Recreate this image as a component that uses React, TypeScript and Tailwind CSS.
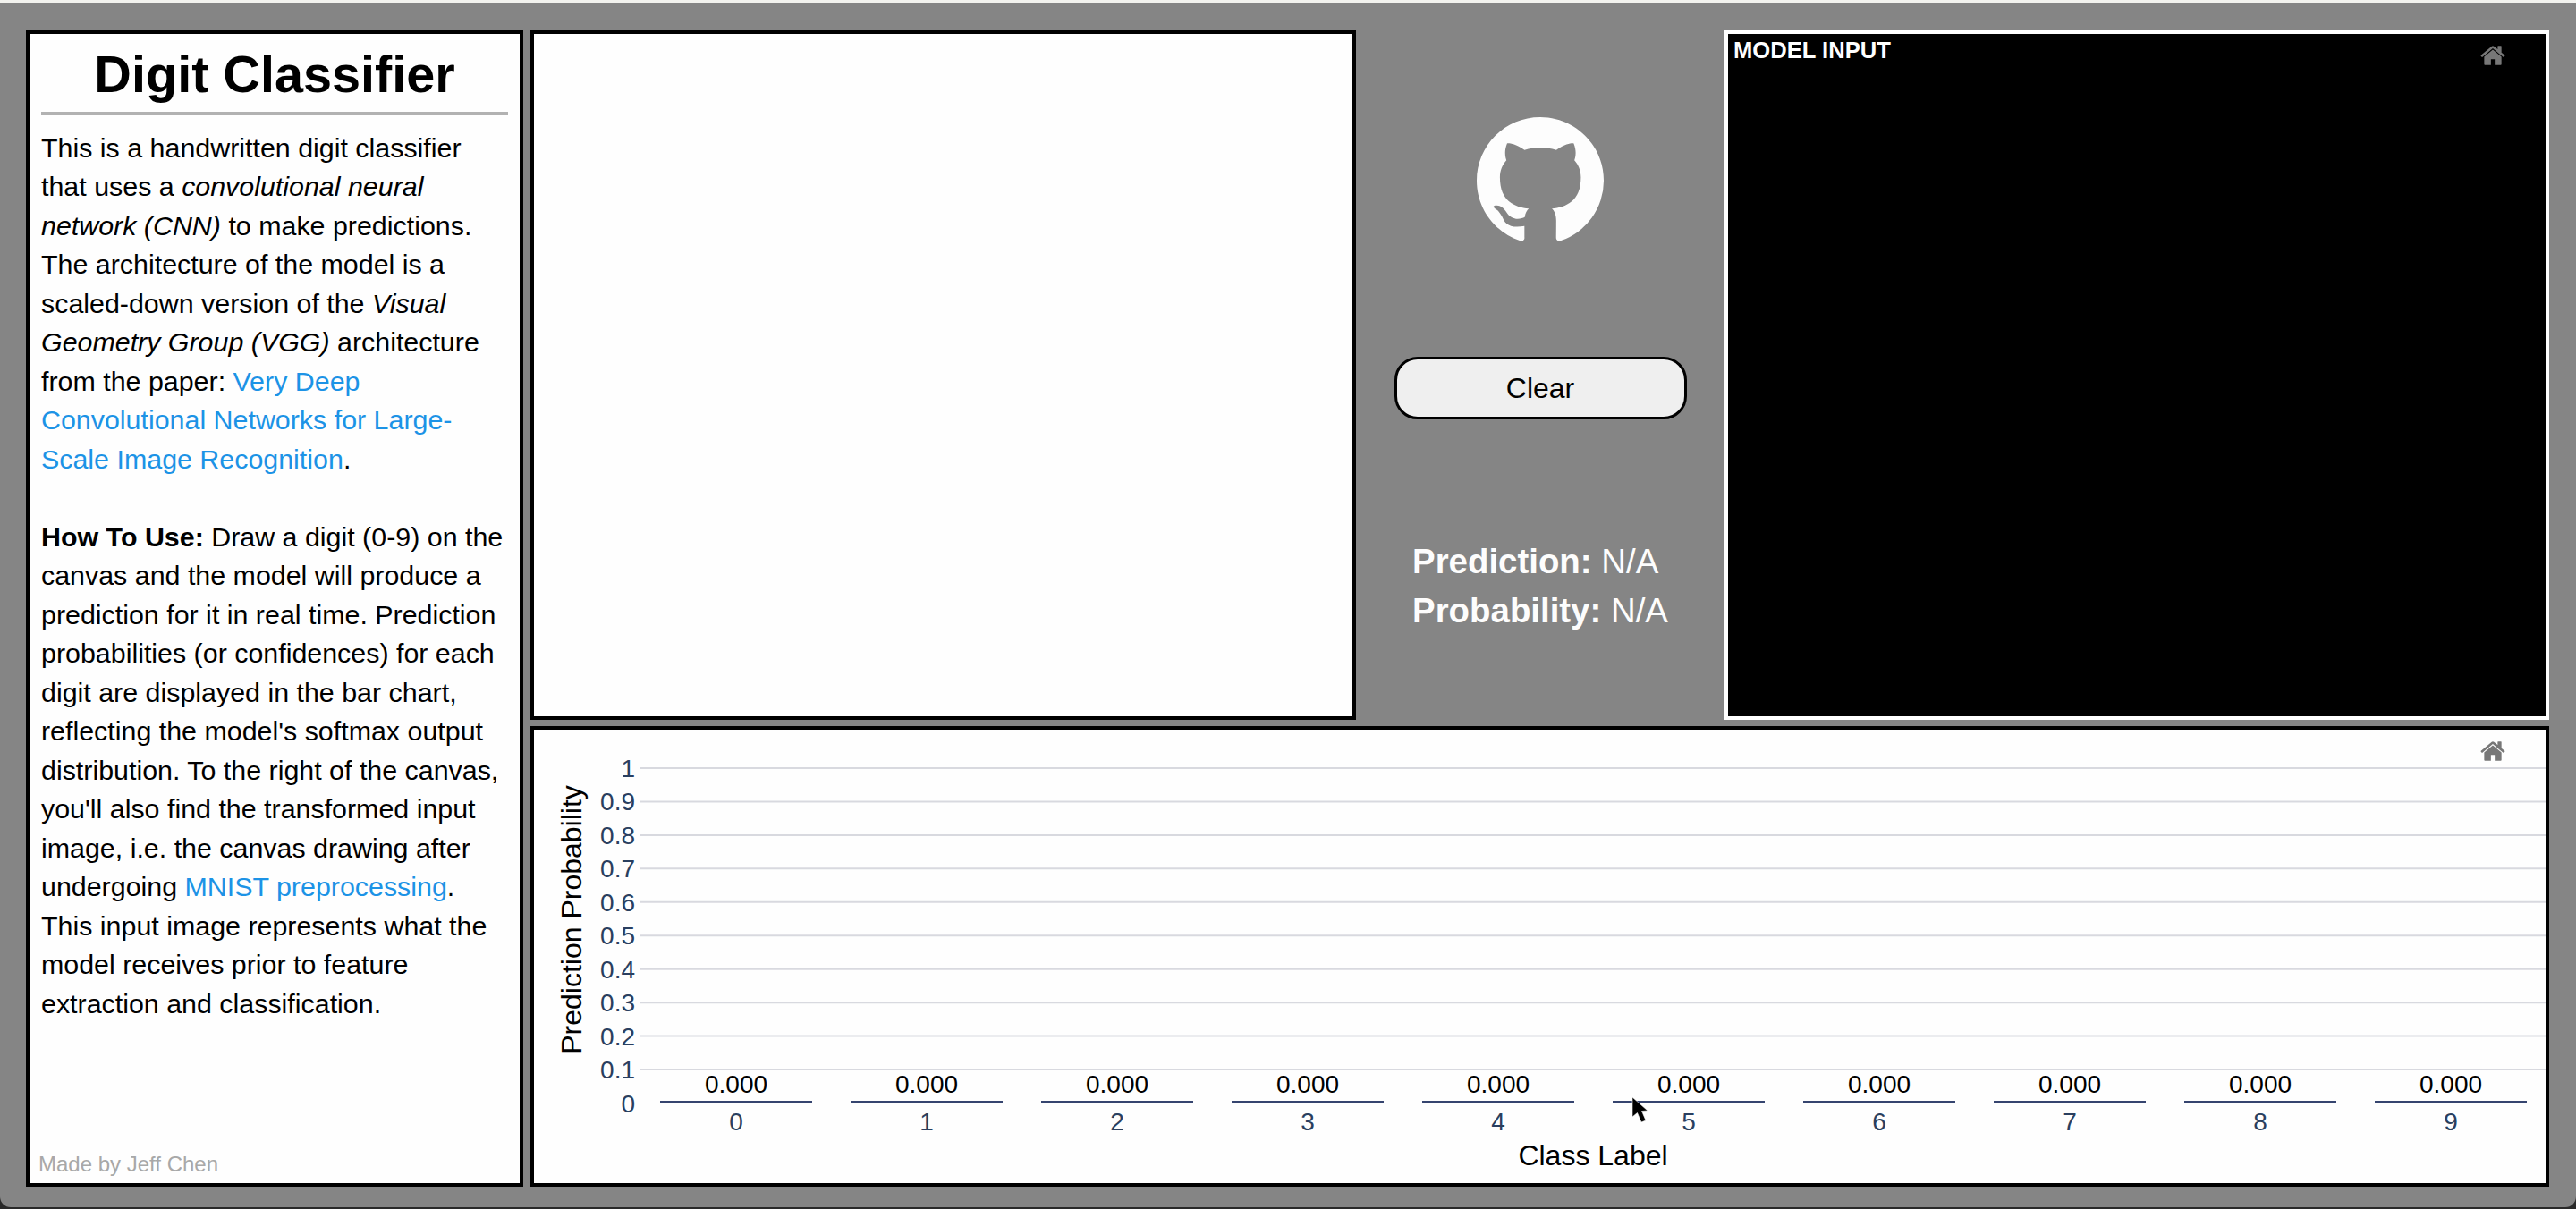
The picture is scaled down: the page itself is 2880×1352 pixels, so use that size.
const HOME = "m786 296v-267q0-15-11-26t-25-10h-214v214h-143v-214h-214q-15 0-25 10t-11 26v267q0 1 0 2t0 2l321 264 321-264q1-1 1-4z m124 39l-34-41q-5-5-12-6h-2q-7 0-12 3l-386 322-386-322q-7-4-13-4-7 2-12 7l-35 41q-4 5-3 13t6 12l401 334q18 15 42 15t43-15l136-114v109q0 8 5 13t13 5h107q8 0 13-5t5-13v-227l122-102q5-5 6-12t-4-13z";
const GH = "M8 0C3.58 0 0 3.58 0 8c0 3.54 2.29 6.53 5.47 7.59.4.07.55-.17.55-.38 0-.19-.01-.82-.01-1.49-2.01.37-2.53-.49-2.69-.94-.09-.23-.48-.94-.82-1.13-.28-.15-.68-.52-.01-.53.63-.01 1.08.58 1.23.82.72 1.21 1.87.87 2.33.66.07-.52.28-.87.51-1.07-1.78-.2-3.64-.89-3.64-3.95 0-.87.31-1.59.82-2.15-.08-.2-.36-1.02.08-2.12 0 0 .67-.21 2.2.82.64-.18 1.32-.27 2-.27.68 0 1.36.09 2 .27 1.53-1.04 2.2-.82 2.2-.82.44 1.1.16 1.92.08 2.12.51.56.82 1.27.82 2.15 0 3.07-1.87 3.75-3.65 3.95.29.25.54.73.54 1.48 0 1.07-.01 1.93-.01 2.2 0 .21.15.46.55.38A8.013 8.013 0 0016 8c0-4.42-3.58-8-8-8z";

function HomeIcon() {
  return (
    <svg viewBox="0 0 928.6 1000" className="absolute top-[9px] right-[45px] w-[28px] h-[30px]" fill="#777777">
      <path d={HOME} transform="matrix(1 0 0 -1 0 850)" />
    </svg>
  );
}

function Chart() {
  const W = 2249;
  const H = 507;
  const ox = 597;
  const oy = 816;
  const ticks = ["1", "0.9", "0.8", "0.7", "0.6", "0.5", "0.4", "0.3", "0.2", "0.1"];
  const font = "'Liberation Sans', Arial, sans-serif";
  return (
    <svg viewBox={`${ox} ${oy} ${W} ${H}`} width={W} height={H} className="block" style={{ fontFamily: font }}>
      {ticks.map((t, i) => {
        const y = 859 + i * 37.45;
        return (
          <g key={t}>
            <line x1={716} x2={2846} y1={y} y2={y} stroke="#d8d9df" strokeWidth={2} />
            <text x={710} y={y + 10} textAnchor="end" fontSize={28} fill="#2a3f5f">{t}</text>
          </g>
        );
      })}
      <text x={710} y={1243.5} textAnchor="end" fontSize={28} fill="#2a3f5f">0</text>
      {Array.from({ length: 10 }, (_, i) => {
        const x = 738 + i * 213;
        return (
          <g key={i}>
            <line x1={x} x2={x + 170} y1={1232.5} y2={1232.5} stroke="#35446f" strokeWidth={3} />
            <text x={x + 85} y={1222} textAnchor="middle" fontSize={28} fill="#000">0.000</text>
            <text x={x + 85} y={1264} textAnchor="middle" fontSize={28} fill="#2a3f5f">{i}</text>
          </g>
        );
      })}
      <text x={1781} y={1303} textAnchor="middle" fontSize={32} fill="#000">Class Label</text>
      <text transform="translate(650 1028.5) rotate(-90)" textAnchor="middle" fontSize={32} fill="#000">Prediction Probability</text>
      <path d="M1825 1227 L1825 1249 L1830.5 1244.5 L1835 1255 L1840 1253 L1835.5 1242.5 L1842 1242 Z" fill="#000" stroke="#fff" strokeWidth={0.6} />
    </svg>
  );
}

export default function App() {
  return (
    <div className="w-[2880px] h-[1352px] overflow-hidden bg-[#2a2a2a] font-['Liberation_Sans',Arial,sans-serif] text-black">
      <div className="h-[3px] bg-[#f2f2ee]" />
      <div className="flex flex-col h-[1347px] bg-[#858585] rounded-b-[12px] pt-[31px] pb-[23px] pl-[29px] pr-[30px]">
        <div className="flex flex-1 gap-[8px] min-h-0">
          <aside className="w-[556px] shrink-0 flex flex-col border-4 border-black bg-[#fefefe] pt-[13px] px-[13px] pb-[4px] text-[30.4px] leading-[43.5px]">
            <h1 className="h-[64px] text-center text-[57.6px] leading-[64px] font-bold">Digit Classifier</h1>
            <div className="h-[4px] bg-[#b2b2b2] mt-[10px] mb-[14.5px]" />
            <p>
              This is a handwritten digit classifier that uses a <em>convolutional neural network (CNN)</em> to make predictions. The architecture of the model is a scaled-down version of the <em>Visual Geometry Group (VGG)</em> architecture from the paper: <a className="text-[#1c93e6]">Very Deep Convolutional Networks for Large-Scale Image Recognition</a>.
            </p>
            <p className="mt-[43.5px]">
              <strong>How To Use:</strong> Draw a digit (0-9) on the canvas and the model will produce a prediction for it in real time. Prediction probabilities (or confidences) for each digit are displayed in the bar chart, reflecting the model's softmax output distribution. To the right of the canvas, you'll also find the transformed input image, i.e. the canvas drawing after undergoing <a className="text-[#1c93e6]">MNIST preprocessing</a>. This input image represents what the model receives prior to feature extraction and classification.
            </p>
            <div className="mt-auto text-[24px] leading-[34px] text-[#a8a8a8] -ml-[3px]">Made by Jeff Chen</div>
          </aside>
          <div className="flex-1 flex flex-col gap-[7px] min-w-0">
            <div className="flex h-[771px] shrink-0">
              <div className="w-[923px] border-4 border-black bg-[#fefefe]" />
              <div className="flex-1 flex flex-col items-center justify-between pt-[97px] pb-[95px]">
                <svg viewBox="0 0 16 16" className="w-[142px] h-[142px]" fill="#fdfdfd">
                  <path d={GH} />
                </svg>
                <button className="w-[327px] h-[70px] mb-[6px] border-[3.5px] border-black rounded-[26px] bg-[#efefef] text-[32px] text-black">Clear</button>
                <div className="text-[38.4px] leading-[54.5px] text-[#fdfdfd]">
                  <div><strong>Prediction:</strong> N/A</div>
                  <div><strong>Probability:</strong> N/A</div>
                </div>
              </div>
              <div className="relative w-[922px] border-4 border-white bg-black">
                <div className="pl-[6px] pt-[1px] text-[25.6px] leading-[34px] font-bold text-white">MODEL INPUT</div>
                <HomeIcon />
              </div>
            </div>
            <div className="relative flex-1 min-h-0 border-4 border-black bg-[#fefefe]">
              <Chart />
              <HomeIcon />
            </div>
          </div>
        </div>
      </div>
    </div>
  );
}
